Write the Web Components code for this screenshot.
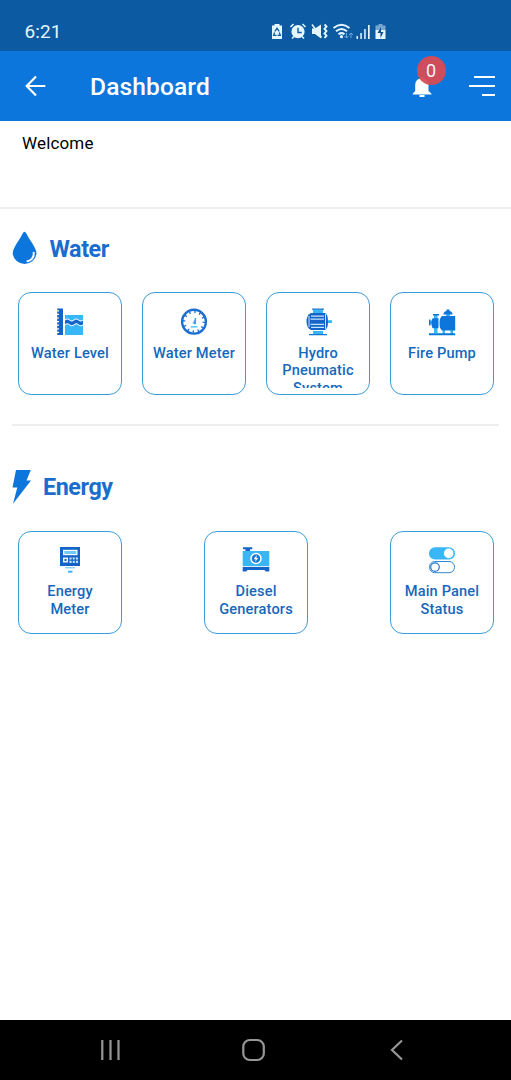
<!DOCTYPE html>
<html lang="en">
<head>
<meta charset="utf-8">
<title>Dashboard</title>
<style>
html,body{margin:0;height:100%;background:#fff}
body{font-family:Roboto,"Liberation Sans",sans-serif}
</style>
</head>
<body>
<app-screen></app-screen>
<script>
const B='#0d76dc', L='#38b6f6';
const ICONS={
level:`<path fill="#1565c8" d="M1.2 .4H7V27H1.2V25H3V23.800H1.2V21.400H3V20.200H1.2V17.800H3V16.600H1.2V14.200H3V13H1.2V10.600H3V9.400H1.2V7H3V5.800H1.2V3.400H3V2.200H1.2Z"/><path fill="${L}" d="M9 7h18v20H9z"/><path fill="#fff" d="M9 11.500q2.200-2 4.500 0t4.500 0 4.500 0 4.500 0v5.800q-2.200 2-4.500 0t-4.500 0-4.500 0-4.500 0z"/><path fill="#1565c8" d="M9 12.500q2.200-2 4.500 0t4.500 0 4.500 0 4.500 0v3.800q-2.200 2-4.500 0t-4.500 0-4.500 0-4.500 0z"/>`,
meter:`<circle cx="14" cy="13.7" r="11.9" fill="#fff" stroke="#1c6ed0" stroke-width="2.4"/><circle cx="14" cy="13.7" r="9.8" fill="none" stroke="#1c6ed0" stroke-width="2.4" stroke-dasharray="1.3 3.831"/><path stroke="${L}" stroke-width="1.4" fill="none" d="M10.8 18.9h6.6M14 15.5h1.4V10"/><path fill="#1c6ed0" d="M12.4 15.5 15.4 10v5.5z" opacity=".6"/>`,
hydro:`<path fill="${L}" d="M9 1.5h10V5H9zM9 23h10v4H9z"/><path fill="#1976d2" d="M8 .6h12v1.200H8zM5 26h18v1.300H5z"/><path fill="#1565c8" d="M7 5h14q3 1 3 8.500t-3 8.500H7q-4.500-2-4.500-8.500T7 5z"/><path stroke="#bfe6fc" stroke-width="1.200" d="M7 8.200h13M6.500 11.200H20M6.500 16.300H20M7 19.300h13"/><path stroke="#fff" stroke-width=".8" d="M21.500 6v15M5 8v11"/><path fill="${L}" d="M24 12.200h4v2.800h-4z"/>`,
pump:`<path fill="${L}" d="M6 7h3.500v18H6zM18 3h4v5h-4zM2 12.500h3v4H2zM14.500 22h2.500v4h-2.500zM22.500 22H25v4h-2.500z"/><path fill="${B}" d="M5 6h6v1.400H5zM1 11.500h1.400v6H1zM4.500 10.200h6v10h-6q-2-5 0-10zM14 8h13.200v14.500H14q-2.500-2-2.500-7.200T14 8zM15.500 5.500q.5-2.500 3-2.500V1.500h3V3q2.500 0 3 2.500v1.100h-9zM1 25.300h26.200v2H1z"/>`,
energy:`<path fill="#1565c8" d="M4 1h20v19H4z"/><path fill="#fff" d="M7 3.800h14.500v5.400H7z"/><path fill="#72cbf8" d="M8.300 5h12v3h-12z"/><path fill="#e6f5ff" d="M7 11.500h5v5H7z"/><path fill="#1565c8" d="M8.500 13h2v2h-2z"/><path fill="#c4e7fc" d="M13.500 11.500h8.500v5.500h-8.500z"/><path stroke="#1565c8" stroke-width="1.200" fill="none" d="M13.500 14.200h8.500M16.200 11.500v6M19.300 11.500v6"/><path fill="#8fd4f8" d="M9 21h10v1.500H9z"/><path fill="${L}" d="M12 24.700h4.500v2H12z"/>`,
diesel:`<path fill="#1565c8" d="M1 1.300h9.300v2H1zM.7 21h26.600v4.500h-3.500l-1.300-1.500h-17L4 25.500H.7z"/><path fill="#1565c8" d="M3.500 3h4.500v2.500H3.500z"/><path fill="${L}" d="M.7 5h26.600v15.200H.7z"/><circle cx="14" cy="12.500" r="5" fill="#1976d2" stroke="#fff" stroke-width="1.500"/><path fill="#fff" d="m14.700 9-3 4.200h2l-.6 2.800 3.200-4.100h-1.800z"/>`,
panel:`<rect x="1" y="1.300" width="26" height="12.200" rx="6" fill="${L}"/><circle cx="20.700" cy="7.400" r="4.800" fill="#fff"/><rect x="1.500" y="15.500" width="25" height="11.200" rx="5.400" fill="#fff" stroke="#3589d0" stroke-width="1"/><circle cx="7" cy="21.100" r="4.300" fill="#fff" stroke="#2478cc" stroke-width="1.200"/>`
};
function define(name,html,setup){
  customElements.define(name,class extends HTMLElement{
    constructor(){super();this.attachShadow({mode:'open'})}
    connectedCallback(){this.shadowRoot.innerHTML=html;if(setup)setup(this)}
  });
}
define('status-bar',`<style>
:host{display:block;height:51px;background:#0b5aa2;color:#e4f6ff}
.row{display:flex;align-items:center;height:51px;padding:12px 0 0 24.500px;box-sizing:border-box}
span{font-size:19px;width:246.500px;letter-spacing:.1px}
svg{margin-top:-1px}
</style><div class="row"><span>6:21</span>
<svg width="116" height="18" viewBox="0 0 116 18" fill="#e4f6ff" stroke="none">
<path d="M3.500 2h5v1.500h2.500V17H1V3.500h2.500z"/><path d="m3.800 9.500 2.200-3.300 2.200 3.300M3.500 10.500l-.8 2.800h2.800M6.500 13.300h2.800l-1-2.800" fill="none" stroke="#0b5aa2" stroke-width="1.300"/>
<circle cx="27" cy="9.700" r="6.600"/><path d="m19.500 5 3-3M34.500 5l-3-3M23 14.500l-2 2M31 14.500l2 2" stroke="#e4f6ff" stroke-width="1.600"/><path d="M27 5.800v4.700h3.700" fill="none" stroke="#0b5aa2" stroke-width="1.400"/>
<path d="M41 6.500h3L50 2.500v14L44 12h-3z"/><path d="m41 2.500 9.500 13" stroke="#e4f6ff" stroke-width="1.500"/><path d="m53.500 2.500 2 2-2 2.300 2 2.300-2 2.300 2 2.300-2 2.300" fill="none" stroke="#e4f6ff" stroke-width="1.900"/>
<path d="M62.500 6q8-6.500 16 0M65 9.200q5.500-4.500 11 0M67.500 12.300q3-2.300 6 0" fill="none" stroke="#e4f6ff" stroke-width="2"/><circle cx="70.500" cy="14.700" r="1.600"/><path d="M75.500 11v5m-2-2 2 2 2-2M80 16v-5m-2 2 2-2 2 2" fill="none" stroke="#6fa6d4"/>
<path d="M85.500 14H87v3h-1.500zM89.300 11h1.500v6h-1.500zM93.200 7h1.500v10h-1.500zM97 3h1.700v14H97z"/>
<path d="M107.500 2h4v1.500h3V8h-10V3.500h3z" opacity=".5"/><path d="M104.500 8h10v9h-10z"/><path d="m110 5-3.500 6h3v5l3-6H110z" fill="#0b4f90"/></svg></div>`);
define('app-header',`<style>
:host{display:block;height:70px;background:#0d76dc;color:#fff}
.row{display:flex;align-items:center;height:70px;padding:0 16px 0 25px}
h1{margin:0 0 0 44px;font-size:24.500px;font-weight:500;letter-spacing:.15px;flex:1}
.bell{position:relative;width:20px;height:22px;margin-right:37px;margin-top:2px;display:flex}
b{position:absolute;left:4.500px;top:-20px;width:29px;height:29px;border-radius:50%;background:#d94b55;opacity:.95;font-size:18px;font-weight:400;line-height:29px;text-align:center}
svg{display:block}
</style><div class="row">
<svg width="21" height="22" viewBox="0 0 21 22" fill="none" stroke="#fff" stroke-width="2.200"><path d="M20.300 11H2M11 1.500 1.700 11 11 20.500"/></svg>
<h1><slot></slot></h1>
<div class="bell"><svg width="20" height="22" viewBox="0 0 20 22" fill="#fff"><path d="M8.300 1h3v1.500q5.200 1 5.200 6.500v6l3 2.700v.8H.7v-.8L3.200 15V9q0-5.500 5.100-6.500zM7.500 19h5v2h-5z"/></svg><b>0</b></div>
<svg width="26" height="22" viewBox="0 0 26 22" fill="#fff"><path d="M5 1h21v2H5zM0 10h26v2H0zM13 19h13v2H13z"/></svg>
</div>`);
define('welcome-panel',`<style>
:host{display:block;height:88px;box-sizing:border-box;border-bottom:2px solid #ececec;padding:12.400px 22px;font-size:17px;line-height:20px;color:#000;letter-spacing:.15px}
</style><slot></slot>`);
define('section-title',`<style>
:host{display:flex;align-items:center;height:36px;padding-left:12px;color:#1a6dcd}
h2{margin:0 0 0 var(--gap,12.500px);font-size:23.300px;font-weight:700;letter-spacing:-.42px}
svg{display:block}
</style><slot name="icon"></slot><h2><slot></slot></h2>`);
define('tile-row',`<style>
:host{display:flex;justify-content:space-between;padding:0 17px 0 18px}
</style><slot></slot>`);
define('device-tile',`<style>
:host{display:flex;flex-direction:column;align-items:center;box-sizing:border-box;width:104px;height:103px;border:1.500px solid #3b9cda;border-radius:13px;padding:14.500px 6px 0;color:#1668bd}
svg{display:block;flex:none}
.label{margin-top:9px;height:43.500px;overflow:hidden;text-align:center;font-size:14.600px;font-weight:500;line-height:17.600px;letter-spacing:.15px;white-space:pre-line}
</style><svg width="28" height="28" viewBox="0 0 28 28"></svg><div class="label"><slot></slot></div>`,
el=>{el.shadowRoot.querySelector('svg').innerHTML=ICONS[el.getAttribute('icon')]});
define('nav-bar',`<style>
:host{display:block;height:60px;background:#000}
div{display:flex;align-items:center;height:60px;padding-left:100px}
svg{display:block}
</style><div><svg width="304" height="24" viewBox="0 0 304 24" fill="none" stroke="#979797" stroke-width="2.200"><path d="M2.300 2v20M10.500 2v20M18.500 2v20"/><rect x="143.300" y="2" width="20.500" height="20" rx="6.500"/><path d="m302 2.500-10 9.500 10 9.500"/></svg></div>`);
define('app-screen',`<style>
:host{display:flex;flex-direction:column;height:1080px;width:511px;background:#fff;overflow:hidden}
main{flex:1}
svg{display:block}
.water{margin:21.500px 0 25.500px}.energy{margin:43.500px 0 25.500px;--gap:12px}
hr{margin:28.500px 12px 0;border:0;height:2px;background:#eee}
</style>
<status-bar></status-bar><app-header>Dashboard</app-header>
<main><welcome-panel>Welcome</welcome-panel>
<section-title class="water"><svg slot="icon" width="25" height="36" viewBox="0 0 25 36"><path fill="#0d76dc" d="M12.500 .8q1 0 2 2C17 8.500 24.500 16.500 24.500 22.700A12 11.800 0 0 1 .7 22.700C.7 16.500 8 8.500 10.500 2.800q1-2 2-2z"/><path d="M21.700 21.700q.5 7-6.200 8.500" fill="none" stroke="#fff" stroke-width="2" stroke-linecap="round"/></svg>Water</section-title>
<tile-row><device-tile icon="level">Water Level</device-tile><device-tile icon="meter">Water Meter</device-tile><device-tile icon="hydro">Hydro
Pneumatic
System</device-tile><device-tile icon="pump">Fire Pump</device-tile></tile-row>
<hr>
<section-title class="energy"><svg slot="icon" width="19" height="36" viewBox="0 0 19 36"><path fill="#0d76dc" d="M4 1h14.800L14.500 11.500H19L1 34.800 5.300 18.500H.5z"/></svg>Energy</section-title>
<tile-row><device-tile icon="energy">Energy
Meter</device-tile><device-tile icon="diesel">Diesel
Generators</device-tile><device-tile icon="panel">Main Panel
Status</device-tile></tile-row>
</main><nav-bar></nav-bar>`);
</script>
</body>
</html>
